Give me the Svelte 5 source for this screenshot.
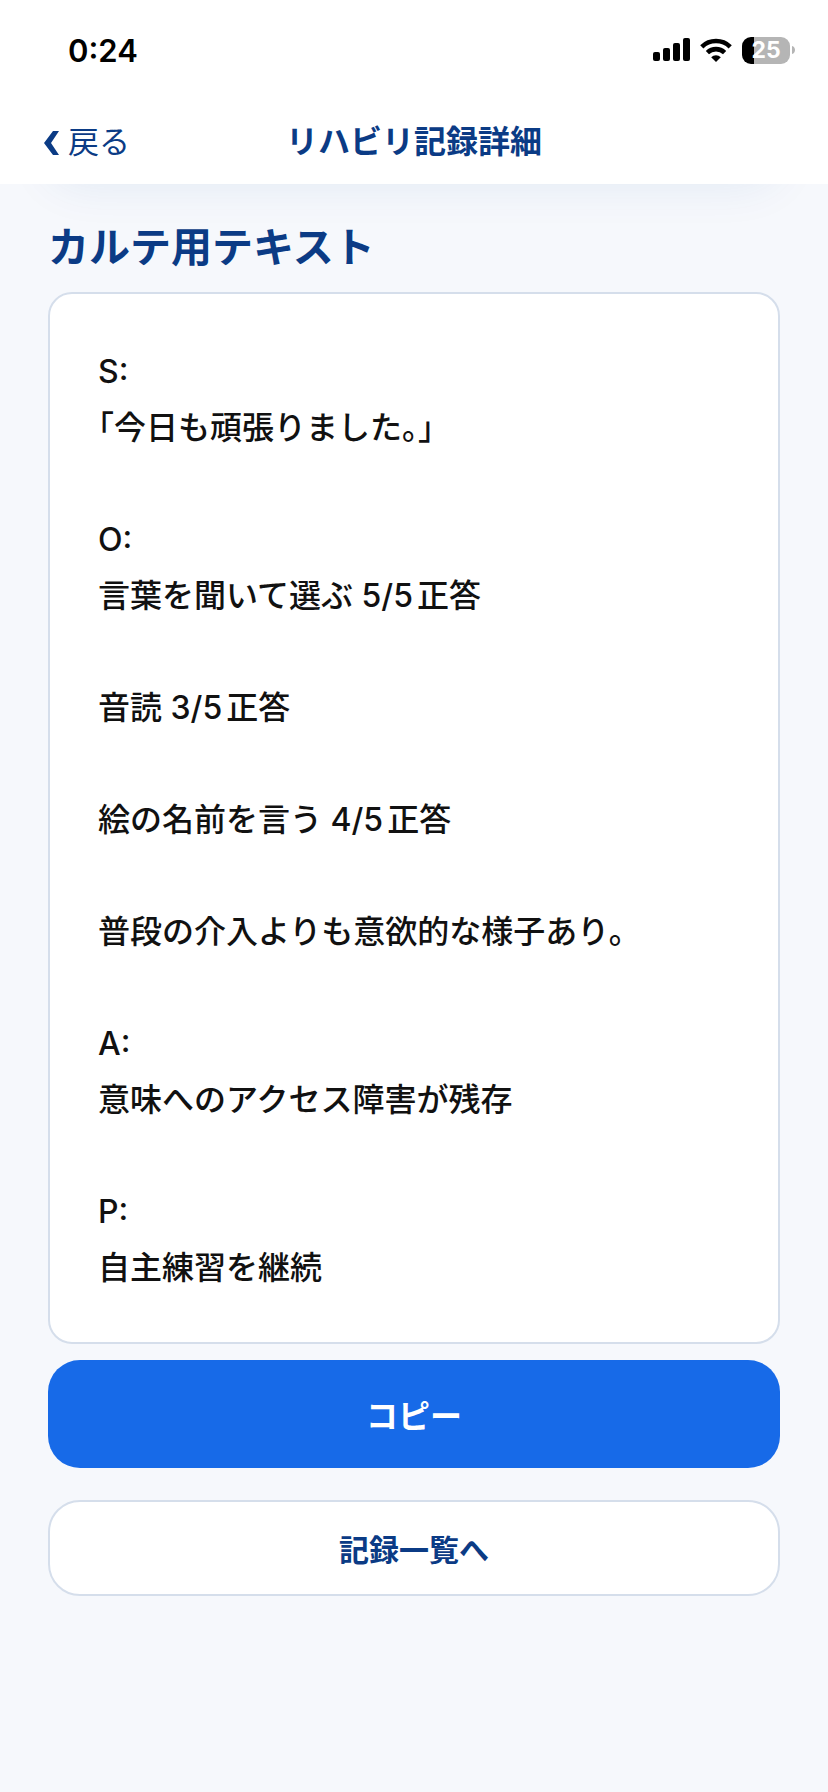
<script lang="ts">
	const record = `S:
「今日も頑張りました。」

O:
言葉を聞いて選ぶ 5/5正答

音読 3/5正答

絵の名前を言う 4/5正答

普段の介入よりも意欲的な様子あり。

A:
意味へのアクセス障害が残存

P:
自主練習を継続`;

	const copy = () => navigator.clipboard?.writeText(record);
</script>

<div class="screen">
	<header>
		<div class="status-bar">
			<time>0:24</time>
			<div class="indicators">
				<svg class="signal" viewBox="0 0 37 24" aria-hidden="true">
					<rect x="0" y="14" width="7" height="9" rx="2" />
					<rect x="10" y="10" width="7" height="13" rx="2" />
					<rect x="20" y="5" width="7" height="18" rx="2" />
					<rect x="30" y="0" width="7" height="23" rx="2" />
				</svg>
				<svg class="wifi" viewBox="0 0 32 24" aria-hidden="true">
					<g fill="none" stroke="#000" stroke-width="4.6">
						<path d="M1.8 8.8a20.4 20.4 0 0 1 28.4 0" />
						<path d="M7.4 14.6a12.4 12.4 0 0 1 17.2 0" />
					</g>
					<path d="M16 24l-4.8-4.8a6.8 6.8 0 0 1 9.6 0z" />
				</svg>
				<div class="battery">
					<span class="level">25</span>
					<svg class="cap" viewBox="0 0 3 8" aria-hidden="true">
						<path d="M0 0c4 1 4 7 0 8z" />
					</svg>
				</div>
			</div>
		</div>
		<nav>
			<a class="back" href="#back">
				<svg viewBox="0 -8 15 32" aria-hidden="true">
					<path d="M9 0h6L7 12l8 12H9L0 12z" />
				</svg>
				戻る
			</a>
			<h1>リハビリ記録詳細</h1>
		</nav>
	</header>

	<main>
		<h2>カルテ用テキスト</h2>
		<div class="record">{record}</div>
		<button type="button" class="primary" onclick={copy}>コピー</button>
		<a class="secondary" href="#records">記録一覧へ</a>
	</main>
</div>

<style>
	:global(body) {
		margin: 0;
		background: #f6f8fc;
	}

	.screen {
		min-height: 100vh;
		color: #111;
		background: #f6f8fc;
		font-family: Inter, 'Noto Sans CJK JP', sans-serif;
	}

	header {
		position: relative;
		z-index: 1;
		background: #fff;
	}

	.status-bar {
		display: flex;
		align-items: center;
		justify-content: space-between;
		height: 100px;
		padding: 0 33px 0 68px;
		color: #000;
	}

	time {
		font-size: 31px;
		font-weight: 600;
	}

	.indicators {
		display: flex;
		align-items: center;
		gap: 10px;
	}

	.signal {
		width: 37px;
		height: 24px;
	}

	.wifi {
		width: 32px;
		height: 24px;
	}

	.battery {
		display: flex;
		align-items: center;
		gap: 2px;
	}

	.level {
		width: 48px;
		border-radius: 9px;
		color: #fff;
		background: linear-gradient(to right, #000 25%, #b5b5b5 25%);
		font-size: 23px;
		font-weight: 700;
		line-height: 27px;
		text-align: center;
	}

	.cap {
		width: 3px;
		height: 8px;
		fill: #b5b5b5;
	}

	nav {
		display: grid;
		grid-template-columns: 1fr auto 1fr;
		align-items: center;
		height: 78px;
		padding: 0 44px 6px;
		color: #0b3b85;
	}

	.back {
		display: flex;
		align-items: center;
		gap: 9px;
		color: inherit;
		font-size: 31px;
		font-weight: 400;
		text-decoration: none;
	}

	.back svg {
		width: 15px;
		height: 32px;
		fill: currentColor;
	}

	h1 {
		margin: 0;
		font-size: 32px;
		font-weight: 700;
	}

	main {
		position: relative;
		display: flex;
		flex-direction: column;
		padding: 33px 48px 48px;
	}

	/* shadow of the card scrolled away under the header */
	main::before {
		content: '';
		position: absolute;
		top: -80px;
		right: 48px;
		left: 48px;
		height: 64px;
		border-radius: 32px;
		box-shadow: 0 16px 48px rgba(11, 75, 150, 0.09);
	}

	h2 {
		position: relative;
		margin: 0 0 15px;
		color: #0b3b85;
		font-size: 41px;
		font-weight: 700;
		line-height: 60px;
	}

	.record {
		padding: 50px 48px 46px;
		border: 2px solid #d5deeb;
		border-radius: 24px;
		background: #fff;
		font-size: 32px;
		font-weight: 500;
		line-height: 56px;
		white-space: pre-wrap;
		text-autospace: normal;
		text-spacing-trim: trim-start;
	}

	.primary,
	.secondary {
		display: flex;
		align-items: center;
		justify-content: center;
		box-sizing: border-box;
		border-radius: 32px;
		font-family: inherit;
		font-weight: 700;
		text-decoration: none;
	}

	.primary {
		height: 108px;
		margin-top: 16px;
		border: 0;
		color: #fff;
		background: #176ae8;
		font-size: 32px;
		cursor: pointer;
	}

	.secondary {
		height: 96px;
		margin-top: 32px;
		border: 2px solid #d5deeb;
		color: #0b3b85;
		background: #fff;
		font-size: 30px;
	}
</style>
